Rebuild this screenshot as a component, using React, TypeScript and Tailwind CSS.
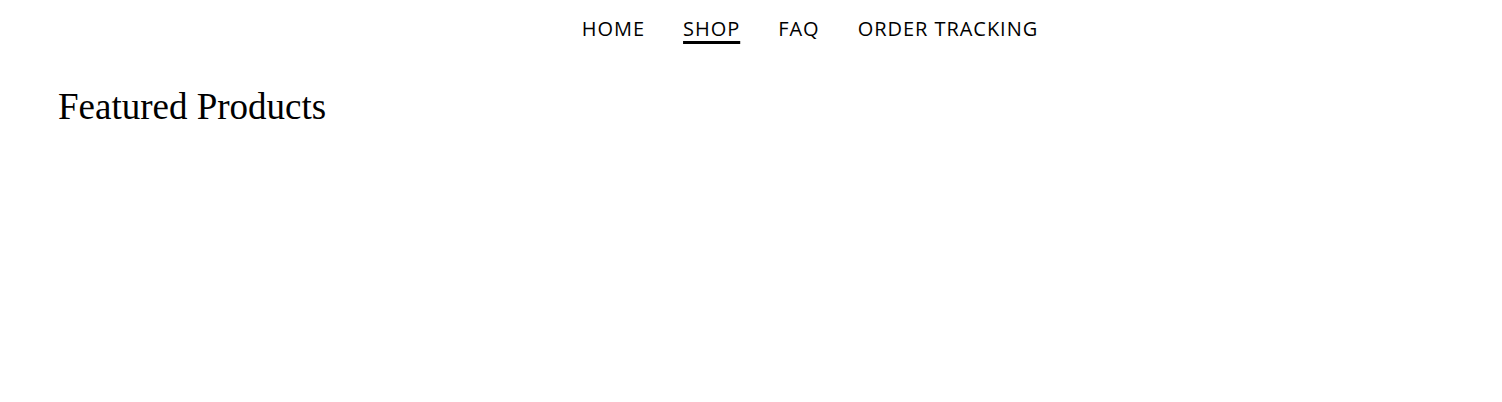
export default function App() {
  const links = ['HOME', 'SHOP', 'FAQ', 'ORDER TRACKING']
  return (
    <div className="min-h-[402px] bg-white text-black">
      <nav className="flex justify-center pt-[15px] pl-[118px]">
        <ul className="flex gap-[38px]">
          {links.map((l) => (
            <li key={l}>
              <a
                href="#"
                className={`text-[20px] leading-[28px] tracking-[0.048em] font-['Open_Sans',sans-serif] ${
                  l === 'SHOP' ? 'underline decoration-[3px] underline-offset-[5px]' : ''
                }`}
              >
                {l}
              </a>
            </li>
          ))}
        </ul>
      </nav>
      <h2 className="mt-[42px] px-[58px] text-[37px] leading-[44px] font-['Liberation_Serif',serif]">
        Featured Products
      </h2>
    </div>
  )
}
